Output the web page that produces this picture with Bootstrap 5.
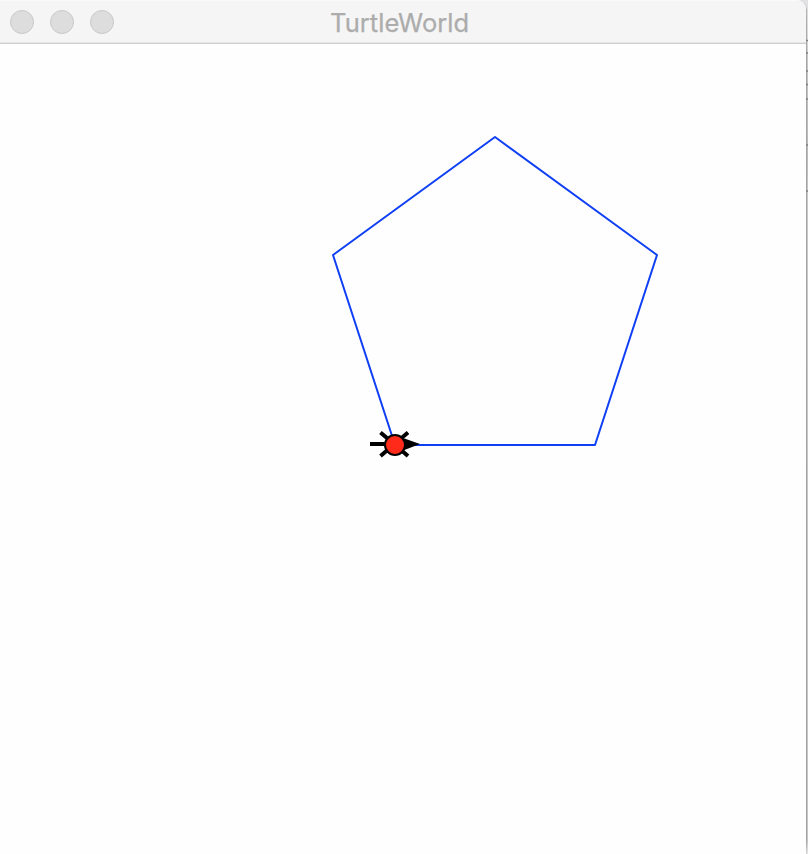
<!DOCTYPE html>
<html lang="en">
<head>
<meta charset="utf-8">
<meta name="viewport" content="width=device-width, initial-scale=1">
<title>TurtleWorld</title>
<link href="https://cdn.jsdelivr.net/npm/bootstrap@5.3.0/dist/css/bootstrap.min.css" rel="stylesheet">
<style>
body { background: linear-gradient(#e2e2e4 0, #d6d6d8 40px, #c6c6c6 60px, #bababa 150px, #c8c8c8 200px, #c6c6c6 840px, #e6e6e6 854px); font-family: Inter, sans-serif; }
.desktop { height: 854px; width: 808px; }
.app-window { width: 806px; background: #fefefe; border-top-right-radius: 9px; }
.window-edge { width: 807px; background: linear-gradient(#b4b4b4 0, #a5a5a5 60px, #a2a2a2 840px, #d8d8d8 854px); border-top-right-radius: 10px; }
.title-bar { height: 44px; background: #f5f5f5; border-bottom: 1px solid #cdcdcd; box-shadow: inset 0 1px #fafafa, inset 0 -1px #e7e7e7; padding-left: 10px; gap: 16px; }
.window-dot { width: 24px; height: 24px; background: #dddddd; border: 1px solid #c9c9c9; }
.window-title { font-size: 25.5px; line-height: 44px; padding-top: 2px; color: #acacac; margin-left: 200px; letter-spacing: .05px; -webkit-text-stroke: .25px #acacac; }
.edge-ticks { left: 806px; top: 0; }
</style>
<script src="https://cdn.jsdelivr.net/npm/bootstrap@5.3.0/dist/js/bootstrap.bundle.min.js"></script>
</head>
<body class="overflow-hidden">
<div class="desktop position-relative">
  <div class="window-edge h-100">
    <main class="app-window h-100 d-flex flex-column overflow-hidden">
      <header class="title-bar d-flex align-items-center flex-shrink-0">
        <span class="window-dot rounded-circle"></span>
        <span class="window-dot rounded-circle"></span>
        <span class="window-dot rounded-circle"></span>
        <h1 class="window-title fw-normal mb-0">TurtleWorld</h1>
      </header>
      <svg class="d-block flex-shrink-0" width="806" height="810" viewBox="0 44 806 810" role="img" aria-label="Turtle drawing a pentagon">
        <path d="M395 445H595L657 255L495 137L333 255Z" fill="none" stroke="#0f3ff5" stroke-width="2" stroke-linejoin="round"/>
        <g stroke="#000">
          <path d="M370 444H390" stroke-width="4"/>
          <path d="M380.500 432.500L408 456M408 432.500L380.500 456" stroke-width="4"/>
          <path d="M403 438L420 444L403 450.500Z" fill="#000" stroke="none"/>
          <circle cx="395" cy="445" r="10" fill="#ff2a1a" stroke-width="2"/>
        </g>
      </svg>
    </main>
  </div>
  <svg class="edge-ticks position-absolute" width="2" height="200" aria-hidden="true">
    <path d="M0 40.500H2M0 53H2M0 71H2M0 84.500H2M0 99H2M0 145H2M0 191H2" stroke="#808080" stroke-width="1.500"/>
  </svg>
</div>
</body>
</html>
